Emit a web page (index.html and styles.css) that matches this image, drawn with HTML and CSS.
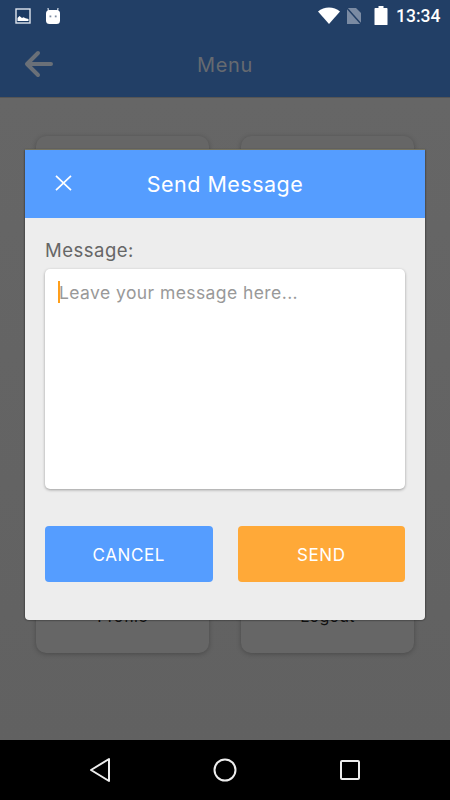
FILE: index.html
```html
<!DOCTYPE html>
<html lang="en">
<head>
<meta charset="utf-8">
<title>Send Message</title>
<link rel="stylesheet" href="styles.css">
</head>
<body>
<div class="phone">
  <div class="status">
    <svg class="ic-img" width="16" height="16" viewBox="0 0 16 16"><rect x="1" y="1" width="14" height="14" fill="#1b3a63" stroke="#dfe5ee" stroke-width="1.4"/><path d="M2.500 13v-3l2-2 2.500 2 1.500-.8 2 1 3 .8v2z" fill="#fff"/></svg>
    <svg class="ic-bot" width="16" height="18" viewBox="0 0 16 18"><path d="M3.500 4 3 1M12.500 4 13 1" stroke="#c9d2df" stroke-width="1.300" fill="none"/><rect x="1" y="3" width="14" height="14" rx="3.500" fill="#fff"/><rect x="4.500" y="8.500" width="1.800" height="1.800" fill="#7d8ba0"/><rect x="9.800" y="8.500" width="1.800" height="1.800" fill="#7d8ba0"/></svg>
    <span class="spacer"></span>
    <svg class="ic-wifi" width="22" height="17" viewBox="0 0 22 17"><path d="M0 4.500C3 1.800 7 .5 11 .5s8 1.300 11 4L11 17z" fill="#fff"/></svg>
    <svg class="ic-sim" width="18" height="18" viewBox="0 0 18 18"><path d="M2 1h9l5 5v11H2z" fill="#7b8ba3"/><path d="M1 0l16 18" stroke="#223f66" stroke-width="1.500"/></svg>
    <svg class="ic-bat" width="14" height="19" viewBox="0 0 14 19"><path d="M4.500 0h5v2h3.500a1 1 0 0 1 .5 1v15.500a.5.5 0 0 1-.5.5H1a.5.5 0 0 1-.5-.5V3a1 1 0 0 1 .5-1h3.500z" fill="#fff"/></svg>
    <span class="time">13:34</span>
  </div>
  <header class="appbar">
    <svg class="back" width="30" height="28" viewBox="0 0 30 28"><path d="M14 3 3 14l11 11M4 14h23" fill="none" stroke="#6a7078" stroke-width="4" stroke-linecap="round" stroke-linejoin="round"/></svg>
    <h1 class="appbar-title">Menu</h1>
  </header>
  <main class="content">
    <div class="card"></div>
    <div class="card"></div>
    <div class="card"><span class="card-label">Profile</span></div>
    <div class="card"><span class="card-label">Logout</span></div>
  </main>
  <nav class="navbar">
    <svg width="22" height="26" viewBox="0 0 22 26"><path d="M20 2v22L2 13z" fill="none" stroke="#eee" stroke-width="2" stroke-linejoin="round"/></svg>
    <svg width="24" height="24" viewBox="0 0 24 24"><circle cx="12" cy="12" r="10.500" fill="none" stroke="#eee" stroke-width="2"/></svg>
    <svg width="22" height="22" viewBox="0 0 22 22"><rect x="2" y="2" width="18" height="18" rx="1" fill="none" stroke="#eee" stroke-width="2"/></svg>
  </nav>
  <section class="modal">
    <div class="modal-head">
      <svg class="close" width="17" height="16" viewBox="0 0 17 16"><path d="M1 .8l15 14.400M16 .8 1 15.200" stroke="#fff" stroke-width="1.700" fill="none"/></svg>
      <h2 class="modal-title">Send Message</h2>
    </div>
    <div class="modal-body">
      <div class="label">Message:</div>
      <div class="field"><span class="caret"></span><span class="placeholder">Leave your message here...</span></div>
      <div class="actions">
        <div class="btn btn-blue">CANCEL</div>
        <div class="btn btn-orange">SEND</div>
      </div>
    </div>
  </section>
</div>
</body>
</html>
```
FILE: styles.css
```css
* { box-sizing: border-box; }
html, body { margin: 0; padding: 0; }
body { font-family: Inter, "Open Sans", sans-serif; }
.phone { position: relative; width: 450px; height: 800px; display: flex; flex-direction: column; overflow: hidden; background: #666; }
.status { height: 31px; flex: none; display: flex; align-items: center; background: #223f66; padding: 0 10px 0 15px; color: #fff; }
.ic-bot { margin-left: 14px; }
.spacer { flex: 1; }
.ic-wifi { margin-right: 5px; }
.ic-sim { margin-right: 11px; }
.ic-bat { margin-right: 8px; }
.time { font-family: Roboto, sans-serif; font-size: 17.500px; font-weight: 500; width: 44px; white-space: nowrap; }
.appbar { height: 67px; flex: none; position: relative; display: flex; align-items: center; justify-content: center; background: #223f66; border-bottom: 1px solid #555; }
.back { position: absolute; left: 24px; top: 19px; }
.appbar-title { margin: 2px 0 0; font-size: 20px; font-weight: 400; letter-spacing: .7px; color: #666a70; }
.content { flex: 1; display: grid; grid-template-columns: 173px 173px; grid-template-rows: 250px 250px; column-gap: 32px; row-gap: 17px; justify-content: center; align-content: start; padding-top: 38px; background: linear-gradient(#666, #616161); }
.card { background: #666; border-radius: 10px; box-shadow: 0 1px 5px rgba(0,0,0,.25); display: flex; flex-direction: column; justify-content: flex-end; align-items: center; padding-bottom: 27px; }
.card-label { font-size: 16px; letter-spacing: .3px; color: #111; }
.navbar { height: 60px; flex: none; background: #000; display: flex; align-items: center; justify-content: space-between; padding: 0 89px; }
.modal { position: absolute; left: 25px; top: 150px; width: 400px; height: 470px; background: #ededed; border-radius: 0 0 4px 4px; box-shadow: 0 -1px 0 #77745f, 0 0 2px #111; display: flex; flex-direction: column; }
.modal-head { height: 68px; flex: none; position: relative; background: #559dff; display: flex; align-items: center; justify-content: center; }
.close { position: absolute; left: 30px; top: 25px; }
.modal-title { margin: 0 0 1px; font-size: 21.500px; font-weight: 400; letter-spacing: .5px; color: #fff; }
.modal-body { padding: 20px 20px 0; }
.label { font-size: 18.500px; line-height: 24px; letter-spacing: .5px; color: #666; }
.field { position: relative; margin-top: 7px; height: 220px; background: #fff; border-radius: 5px; box-shadow: 0 1px 3px rgba(0,0,0,.35); padding: 11px 13px; font-size: 17.500px; line-height: 26px; letter-spacing: .42px; color: #999; display: flex; align-items: flex-start; }
.caret { width: 2px; height: 22px; margin-top: 1px; background: #ff9f1a; flex: none; }
.placeholder { margin-left: -1px; }
.actions { display: flex; justify-content: space-between; margin-top: 37px; }
.btn { width: 167.500px; height: 56px; padding-top: 1px; border-radius: 4px; display: flex; align-items: center; justify-content: center; color: #fff; font-size: 17px; letter-spacing: .6px; }
.btn-blue { background: #559dff; }
.btn-orange { background: #ffa938; }
```
